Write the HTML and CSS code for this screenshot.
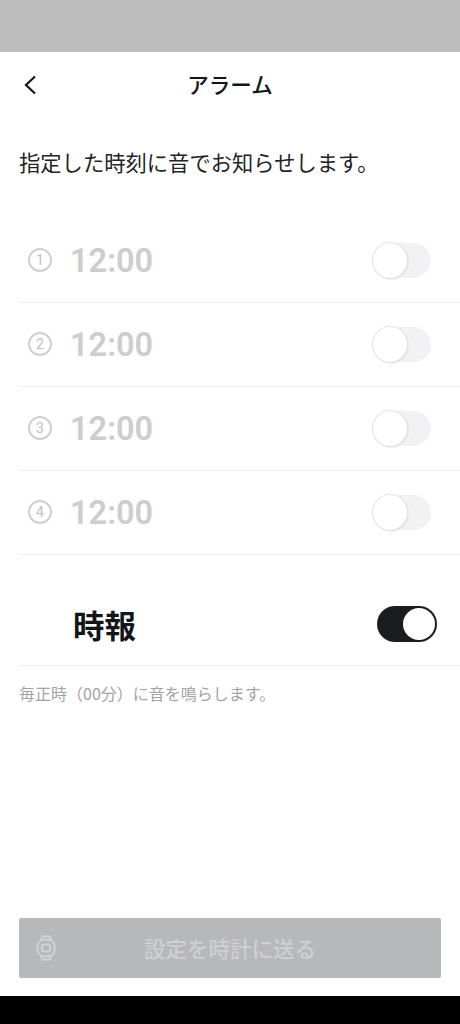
FILE: index.html
```html
<!DOCTYPE html>
<html lang="ja">
<head>
<meta charset="utf-8">
<title>アラーム</title>
<link rel="stylesheet" href="styles.css">
</head>
<body>
<div class="screen">
  <div class="topbar"></div>
  <main class="content">
    <header class="nav">
      <svg class="back" width="16" height="22" viewBox="0 0 16 22"><path d="M13 2.500 4 11l9 8.500" fill="none" stroke="#141518" stroke-width="2.200"/></svg>
      <h1 class="title">アラーム</h1>
    </header>
    <p class="intro">指定した時刻に音でお知らせします。</p>
    <section class="alarms">
      <div class="row"><span class="num">1</span><span class="time">12:00</span><span class="toggle"><span class="knob"></span></span></div>
      <div class="row"><span class="num">2</span><span class="time">12:00</span><span class="toggle"><span class="knob"></span></span></div>
      <div class="row"><span class="num">3</span><span class="time">12:00</span><span class="toggle"><span class="knob"></span></span></div>
      <div class="row"><span class="num">4</span><span class="time">12:00</span><span class="toggle"><span class="knob"></span></span></div>
    </section>
    <section class="chime">
      <span class="chime-label">時報</span>
      <span class="toggle-on"><span class="knob-on"></span></span>
    </section>
    <p class="note">毎正時（00分）に音を鳴らします。</p>
    <div class="spacer"></div>
    <div class="send">
      <svg class="watch" width="20" height="26" viewBox="0 0 20 26" fill="none" stroke="#d2d2d2" stroke-width="2"><path d="M5 5 6 1.500h8L15 5M5 21l1 3.500h8l1-3.500"/><rect x="1.500" y="5" width="17" height="16" rx="5.500"/><rect x="6" y="9.500" width="8" height="7" rx="1.500"/></svg>
      <span class="send-label">設定を時計に送る</span>
    </div>
  </main>
  <div class="bottombar"></div>
</div>
</body>
</html>
```
FILE: styles.css
```css
* { box-sizing: border-box; }
html, body { margin: 0; padding: 0; }
body { background: #fff; font-family: "Noto Sans CJK JP", "Noto Sans", sans-serif; }
.screen { width: 460px; height: 1024px; display: flex; flex-direction: column; overflow: hidden; }
.topbar { height: 52px; background: #bdbdbd; flex: none; }
.bottombar { height: 28px; background: #000; flex: none; }
.content { flex: 1; display: flex; flex-direction: column; background: #fff; }
.nav { height: 66px; display: flex; align-items: center; justify-content: center; position: relative; }
.back { position: absolute; left: 22px; top: 22px; }
.title { margin: -3px 0 0; font-size: 21.500px; font-weight: 500; color: #141518; line-height: 60px; }
.intro { margin: 31px 0 0 19px; font-size: 21.300px; line-height: 26px; color: #222326; white-space: nowrap; height: 26px; }
.alarms { margin-top: 44px; margin-left: 19px; }
.row { height: 84px; display: flex; align-items: center; border-bottom: 1px solid #f0f0f0; padding-right: 29px; padding-left: 9px; }
.num { width: 24px; height: 24px; border: 2px solid #cfcfd1; border-radius: 50%; font-size: 14px; line-height: 20px; text-align: center; color: #c0c0c2; font-family: "Roboto", sans-serif; flex: none; margin-top: -1px; }
.time { margin-left: 18px; font-family: "Roboto", sans-serif; font-weight: 600; font-size: 32.500px; color: #cdcdcf; flex: 1; }
.toggle { width: 59px; height: 35px; border-radius: 18px; background: #f2f2f4; flex: none; position: relative; margin-top: -1px; }
.knob { position: absolute; left: 1px; top: 0; width: 34px; height: 35px; border-radius: 50%; background: #fff; box-shadow: 0 0 0 1px #e2e2e2, 1px 1px 2px #d4d4d4; }
.chime { height: 111px; margin-left: 19px; padding: 28px 23px 0 54px; display: flex; align-items: center; justify-content: space-between; border-bottom: 1px solid #f0f0f0; }
.chime-label { font-size: 31.500px; font-weight: 700; color: #141518; line-height: 40px; }
.toggle-on { width: 60px; height: 36px; border-radius: 18px; background: #1b1c1f; position: relative; flex: none; }
.knob-on { position: absolute; right: 2px; top: 2px; width: 32px; height: 32px; border-radius: 50%; background: #fff; }
.note { margin: 17px 0 0 19px; font-size: 16px; line-height: 20px; color: #a3a3a5; white-space: nowrap; }
.spacer { flex: 1; }
.send { margin: 0 19px 18px; height: 60px; background: #b7b8ba; border-radius: 2px; display: flex; align-items: center; justify-content: center; position: relative; }
.watch { position: absolute; left: 17px; top: 17px; }
.send-label { font-size: 21.500px; font-weight: 500; color: #cfcfd1; margin-top: -2px; }
```
